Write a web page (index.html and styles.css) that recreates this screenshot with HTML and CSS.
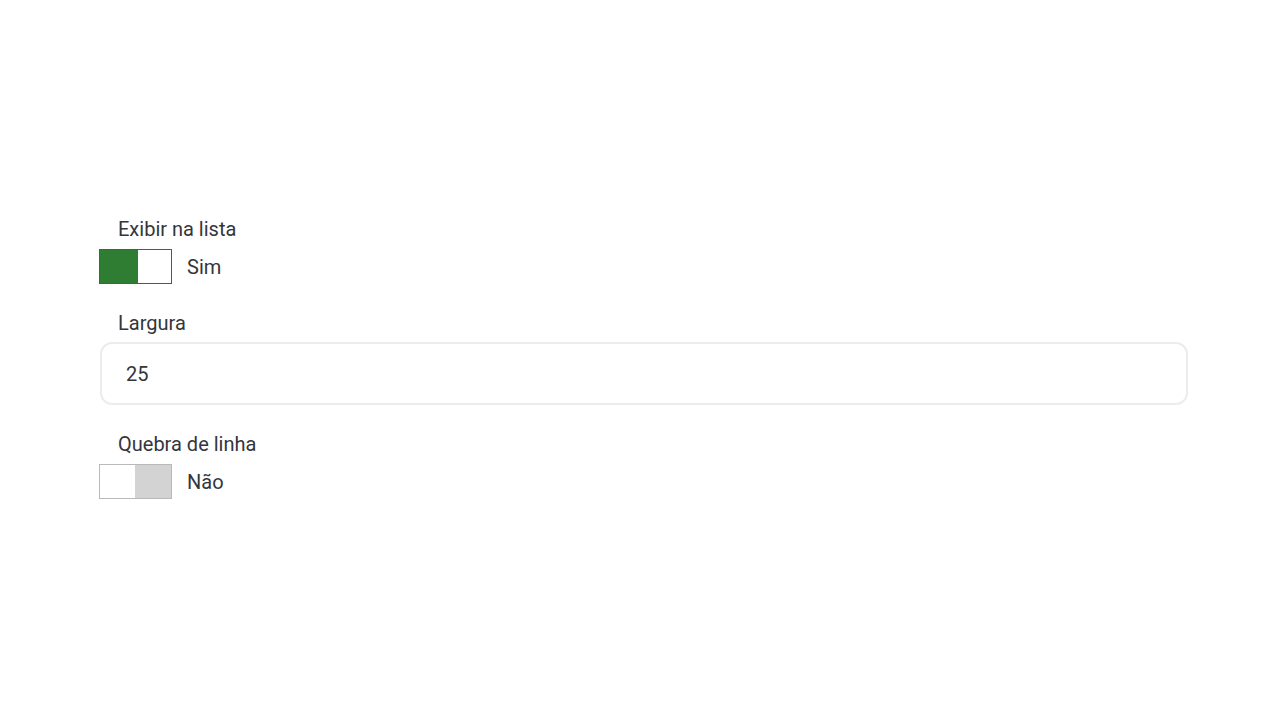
FILE: index.html
```html
<!DOCTYPE html>
<html lang="pt">
<head>
<meta charset="utf-8">
<link rel="stylesheet" href="styles.css">
</head>
<body>
<div class="form">
  <div class="field">
    <label class="label">Exibir na lista</label>
    <div class="switch-row">
      <div class="switch on"><span class="knob-a"></span><span class="knob-b"></span></div>
      <span class="switch-text">Sim</span>
    </div>
  </div>
  <div class="field">
    <label class="label label-input">Largura</label>
    <div class="input">25</div>
  </div>
  <div class="field">
    <label class="label">Quebra de linha</label>
    <div class="switch-row">
      <div class="switch off"><span class="knob-a"></span><span class="knob-b"></span></div>
      <span class="switch-text">Não</span>
    </div>
  </div>
</div>
</body>
</html>
```
FILE: styles.css
```css
html, body {
  margin: 0;
  padding: 0;
  background: #ffffff;
  font-family: Roboto, "Liberation Sans", sans-serif;
  color: #333740;
}
.form {
  padding: 216px 0 0 99px;
  width: 1089px;
  display: flex;
  flex-direction: column;
}
.field {
  display: flex;
  flex-direction: column;
}
.field + .field {
  margin-top: 26px;
}
.label {
  font-size: 20px;
  line-height: 26px;
  padding-left: 19px;
  margin-bottom: 7px;
  color: #33363d;
}
.label-input {
  margin-bottom: 6px;
}
.switch-row {
  display: flex;
  align-items: center;
  gap: 15px;
}
.switch {
  width: 73px;
  height: 35px;
  box-sizing: border-box;
  display: flex;
}
.switch.on {
  border: 1px solid #2e7130;
}
.switch.on .knob-a { width: 38px; background: #2e7d32; }
.switch.on .knob-b { flex: 1; background: #fff; }
.switch.off {
  border: 1px solid #b9b9b9;
}
.switch.off .knob-a { width: 35px; background: #fff; }
.switch.off .knob-b { flex: 1; background: #d3d3d3; }
.switch-text {
  font-size: 20px;
  color: #33363d;
}
.input {
  height: 63px;
  box-sizing: border-box;
  border: 2px solid #ececec;
  border-radius: 12px;
  margin-left: 1px;
  display: flex;
  align-items: center;
  padding-left: 24px;
  font-size: 20px;
  color: #33363d;
}
```
